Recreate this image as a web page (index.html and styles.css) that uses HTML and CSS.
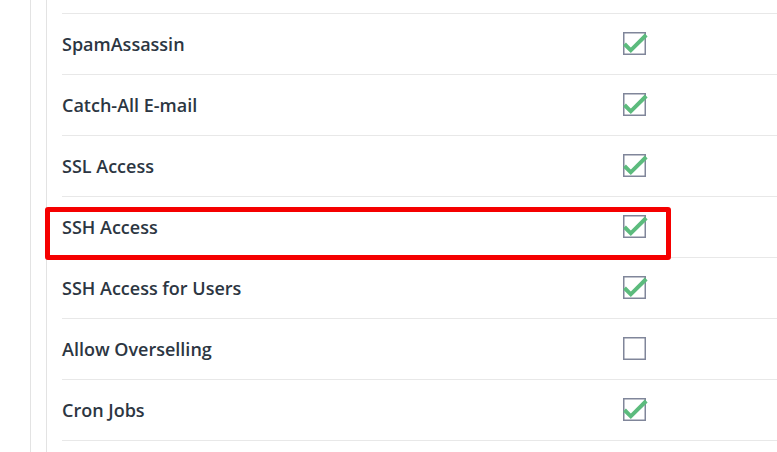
FILE: index.html
```html
<!DOCTYPE html>
<html>
<head>
<meta charset="utf-8">
<link rel="stylesheet" href="styles.css">
</head>
<body>
<div class="page">
  <div class="outer">
    <div class="inner">
      <div class="list">
        <div class="row"><span class="label">SpamAssassin</span><span class="cb checked"><svg width="27" height="26" viewBox="0 0 27 26"><rect x="0.75" y="2.75" width="21.5" height="21.5" fill="#fff" stroke="#80869a" stroke-width="1.5"/><path d="M1.5 14 L7.8 20.3 L23.2 5" fill="none" stroke="#5cbb7d" stroke-width="4"/></svg></span></div>
        <div class="row"><span class="label">Catch-All E-mail</span><span class="cb checked"><svg width="27" height="26" viewBox="0 0 27 26"><rect x="0.75" y="2.75" width="21.5" height="21.5" fill="#fff" stroke="#80869a" stroke-width="1.5"/><path d="M1.5 14 L7.8 20.3 L23.2 5" fill="none" stroke="#5cbb7d" stroke-width="4"/></svg></span></div>
        <div class="row"><span class="label">SSL Access</span><span class="cb checked"><svg width="27" height="26" viewBox="0 0 27 26"><rect x="0.75" y="2.75" width="21.5" height="21.5" fill="#fff" stroke="#80869a" stroke-width="1.5"/><path d="M1.5 14 L7.8 20.3 L23.2 5" fill="none" stroke="#5cbb7d" stroke-width="4"/></svg></span></div>
        <div class="row"><span class="label">SSH Access</span><span class="cb checked"><svg width="27" height="26" viewBox="0 0 27 26"><rect x="0.75" y="2.75" width="21.5" height="21.5" fill="#fff" stroke="#80869a" stroke-width="1.5"/><path d="M1.5 14 L7.8 20.3 L23.2 5" fill="none" stroke="#5cbb7d" stroke-width="4"/></svg></span></div>
        <div class="row"><span class="label">SSH Access for Users</span><span class="cb checked"><svg width="27" height="26" viewBox="0 0 27 26"><rect x="0.75" y="2.75" width="21.5" height="21.5" fill="#fff" stroke="#80869a" stroke-width="1.5"/><path d="M1.5 14 L7.8 20.3 L23.2 5" fill="none" stroke="#5cbb7d" stroke-width="4"/></svg></span></div>
        <div class="row"><span class="label">Allow Overselling</span><span class="cb"><svg width="27" height="26" viewBox="0 0 27 26"><rect x="0.75" y="2.75" width="21.5" height="21.5" fill="#fff" stroke="#80869a" stroke-width="1.5"/></svg></span></div>
        <div class="row"><span class="label">Cron Jobs</span><span class="cb checked"><svg width="27" height="26" viewBox="0 0 27 26"><rect x="0.75" y="2.75" width="21.5" height="21.5" fill="#fff" stroke="#80869a" stroke-width="1.5"/><path d="M1.5 14 L7.8 20.3 L23.2 5" fill="none" stroke="#5cbb7d" stroke-width="4"/></svg></span></div>
        <div class="row"></div>
      </div>
    </div>
  </div>
  <div class="highlight"></div>
</div>
</body>
</html>
```

FILE: styles.css
```css
html, body {
  margin: 0;
  padding: 0;
  background: #fff;
  overflow: hidden;
}
body {
  width: 777px;
  height: 452px;
  font-family: "Open Sans", "Liberation Sans", sans-serif;
  color: #2c3642;
}
.page {
  position: relative;
  height: 452px;
  padding-left: 30px;
  box-sizing: border-box;
  overflow: hidden;
}
.outer {
  border-left: 1px solid #e3e3e3;
  padding-left: 15px;
  height: 100%;
}
.inner {
  border-left: 1px solid #e3e3e3;
  padding-left: 15px;
  height: 100%;
  padding-top: 13px;
  box-sizing: border-box;
}
.row {
  display: grid;
  grid-template-columns: 561px auto;
  align-items: center;
  height: 60px;
  border-top: 1px solid #e8e8e8;
}
.label {
  font-size: 18px;
  line-height: 24px;
  font-weight: 600;
}
.cb {
  display: block;
  height: 26px;
  margin-top: -2px;
}
.cb svg {
  display: block;
}
.highlight {
  position: absolute;
  left: 45px;
  top: 207px;
  width: 616px;
  height: 43px;
  border: 5px solid #f50000;
  border-radius: 3px;
}
```
